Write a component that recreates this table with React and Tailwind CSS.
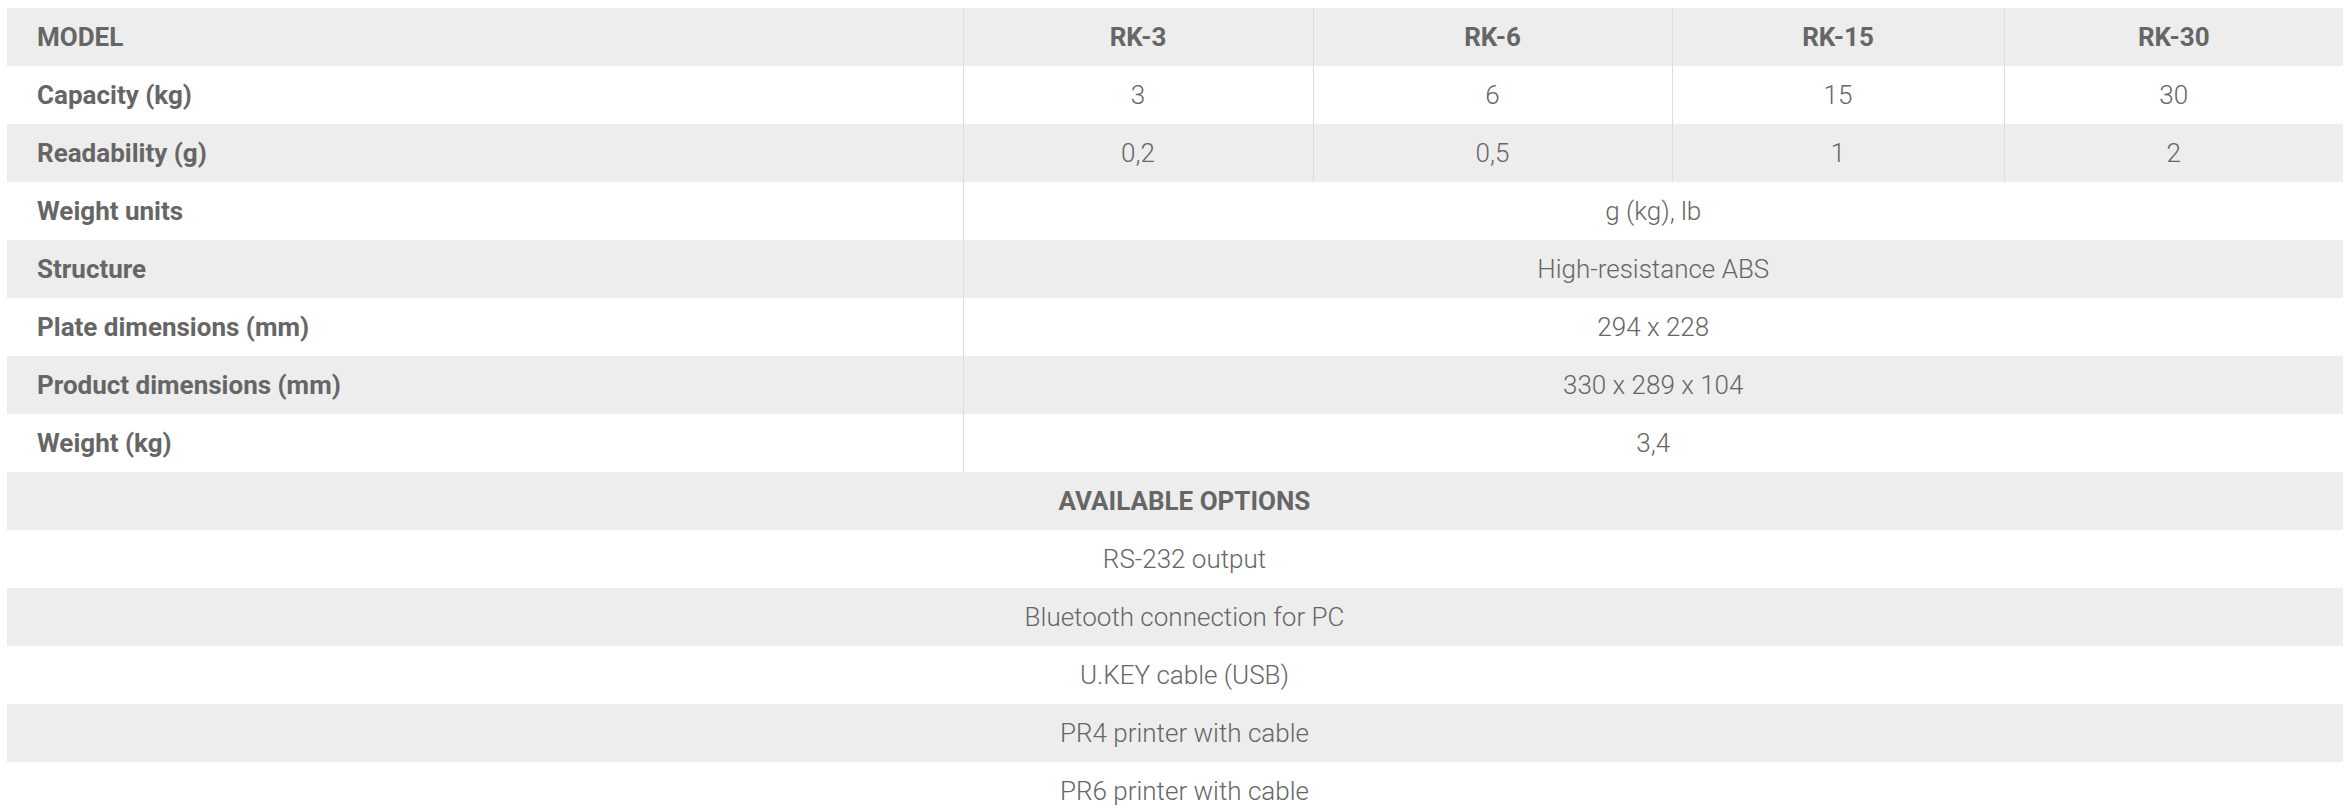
const specs = [
    { label: 'Capacity (kg)', values: ['3', '6', '15', '30'] },
    { label: 'Readability (g)', values: ['0,2', '0,5', '1', '2'] },
    { label: 'Weight units', value: 'g (kg), lb' },
    { label: 'Structure', value: 'High-resistance ABS' },
    { label: 'Plate dimensions (mm)', value: '294 x 228' },
    { label: 'Product dimensions (mm)', value: '330 x 289 x 104' },
    { label: 'Weight (kg)', value: '3,4' },
]

const options = [
    'RS-232 output',
    'Bluetooth connection for PC',
    'U.KEY cable (USB)',
    'PR4 printer with cable',
    'PR6 printer with cable',
]

const models = ['RK-3', 'RK-6', 'RK-15', 'RK-30']

const rowBg = (i) => (i % 2 === 0 ? 'bg-[#ededed]' : 'bg-white')

const SpecRow = ({ row, index }) => (
    <tr className={`h-[58px] ${rowBg(index)}`}>
        <td className="pl-[30px] font-bold">{row.label}</td>
        {row.values ? (
            row.values.map((v, i) => (
                <td key={i} className="text-center font-light border-l border-[#dcdcdc]">{v}</td>
            ))
        ) : (
            <td colSpan={4} className="text-center font-light border-l border-[#dcdcdc]">{row.value}</td>
        )}
    </tr>
)

const App = () => (
    <div className="bg-white min-h-screen pt-[8px] px-[7px]">
        <table
            className="w-[2336px] table-fixed border-collapse text-[26px] leading-none text-[#666666]"
            style={{ fontFamily: 'Roboto, "Liberation Sans", sans-serif' }}
        >
            <colgroup>
                <col className="w-[956px]" />
                <col className="w-[350px]" />
                <col className="w-[359px]" />
                <col className="w-[332px]" />
                <col className="w-[339px]" />
            </colgroup>
            <tbody>
                <tr className="h-[58px] bg-[#ededed]">
                    <td className="pl-[30px] font-bold">MODEL</td>
                    {models.map((m) => (
                        <td key={m} className="text-center font-bold border-l border-[#dcdcdc]">{m}</td>
                    ))}
                </tr>
                {specs.map((row, i) => (
                    <SpecRow key={row.label} row={row} index={i + 1} />
                ))}
                <tr className="h-[58px] bg-[#ededed]">
                    <td colSpan={5} className="pl-[19px] text-center font-bold">AVAILABLE OPTIONS</td>
                </tr>
                {options.map((o, i) => (
                    <tr key={o} className={`h-[58px] ${rowBg(i + 1)}`}>
                        <td colSpan={5} className="pl-[19px] text-center font-light">{o}</td>
                    </tr>
                ))}
            </tbody>
        </table>
    </div>
)

export default App
